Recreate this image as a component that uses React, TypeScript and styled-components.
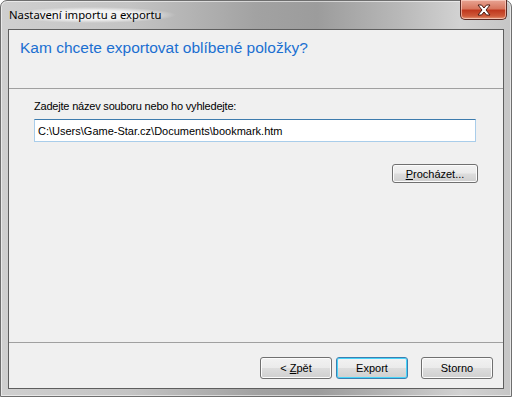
import React from "react";
import styled, {createGlobalStyle} from "styled-components";

const GlobalStyle = createGlobalStyle`
  html, body {
    margin: 0;
    padding: 0;
    width: 512px;
    height: 397px;
    overflow: hidden;
    background: #ffffff;
  }
  * {
    box-sizing: border-box;
  }
`

const Window = styled.div`
  width: 512px;
  height: 397px;
  display: flex;
  flex-direction: column;
  padding: 0 7px 7px 7px;
  border: 1px solid #6e6e6e;
  border-radius: 7px 7px 0 0;
  background: linear-gradient(90deg, #cfcfcf 0%, #c4c4c4 25%, #a2a2a2 50%, #9c9c9c 62%, #b8b8b8 78%, #d2d2d2 90%, #c6c6c6 100%);
  box-shadow: inset 0 0 0 1px rgba(255, 255, 255, 0.55);
`

const TitleBar = styled.div`
  height: 28px;
  flex: none;
  display: flex;
  align-items: flex-start;
  position: relative;
`

const Title = styled.div`
  margin-top: 6px;
  padding: 0 14px 0 1px;
  font-family: "Segoe UI", "Noto Sans", "Liberation Sans", sans-serif;
  font-size: 11.3px;
  line-height: 16px;
  color: #000000;
  background: radial-gradient(ellipse closest-side at center, rgba(255, 255, 255, 0.8) 55%, rgba(255, 255, 255, 0) 100%);
`

const CloseButton = styled.div`
  position: absolute;
  top: -1px;
  right: -3px;
  width: 47px;
  height: 20px;
  border: 1px solid #5c2a24;
  border-top: none;
  border-radius: 0 0 5px 5px;
  background: linear-gradient(180deg, #e8a493 0%, #d8775f 45%, #c0391f 55%, #cf5a3a 85%, #e59a7a 100%);
  box-shadow: inset 0 0 0 1px rgba(255, 220, 210, 0.6);
  display: flex;
  align-items: center;
  justify-content: center;
`

const Client = styled.div`
  flex: 1;
  display: flex;
  flex-direction: column;
  background: #f0f0f0;
  border: 1px solid #5e5e5e;
`

const Header = styled.div`
  height: 59px;
  flex: none;
  padding: 8px 0 0 11px;
  border-bottom: 1px solid #a0a0a0;
`

const Heading = styled.h1`
  margin: 0;
  font-family: "Liberation Sans", Arial, sans-serif;
  font-weight: normal;
  font-size: 15.5px;
  line-height: 20px;
  color: #1b6fd1;
`

const Body = styled.div`
  flex: 1;
  display: flex;
  flex-direction: column;
  padding: 10px 27px 0 25px;
  border-bottom: 1px solid #a0a0a0;
`

const Label = styled.div`
  font-family: "Liberation Sans", Arial, sans-serif;
  font-size: 11px;
  letter-spacing: -0.2px;
  line-height: 14px;
  color: #000000;
`

const PathInput = styled.div`
  margin-top: 6px;
  height: 23px;
  padding: 0 3px;
  display: flex;
  align-items: center;
  background: #ffffff;
  border: 1px solid #a9cdea;
  border-top-color: #3d7bad;
  font-family: "Liberation Sans", Arial, sans-serif;
  font-size: 11px;
  color: #000000;
  white-space: nowrap;
`

const BrowseRow = styled.div`
  margin-top: 22px;
  margin-right: -2px;
  display: flex;
  justify-content: flex-end;
`

const Button = styled.div<{ $wide?: boolean; $focused?: boolean; $apart?: boolean }>`
  width: ${p => (p.$wide ? "86px" : "72px")};
  height: ${p => (p.$wide ? "19px" : "22px")};
  margin-left: ${p => (p.$apart ? "9px" : "0")};
  display: flex;
  align-items: center;
  justify-content: center;
  border: 1px solid ${p => (p.$focused ? "#3c7fb1" : "#707070")};
  border-radius: 3px;
  background: linear-gradient(180deg, #f2f2f2 0%, #ebebeb 48%, #dddddd 52%, #cfcfcf 100%);
  box-shadow: inset 0 0 0 1px ${p => (p.$focused ? "#48d4f9" : "#fcfcfc")};
  font-family: "Liberation Sans", Arial, sans-serif;
  font-size: 11px;
  color: #000000;

  u {
    text-decoration: underline;
    text-underline-offset: 1px;
  }
`

const Footer = styled.div`
  height: 45px;
  flex: none;
  display: flex;
  align-items: flex-start;
  padding: 14px 10px 0 0;
  justify-content: flex-end;
  gap: 4px;
`

export default function App() {
    return (
        <>
            <GlobalStyle/>
            <Window>
                <TitleBar>
                    <Title>Nastavení importu a exportu</Title>
                    <CloseButton>
                        <svg width="16" height="12" viewBox="0 0 16 12">
                            <path d="M2 1 L5.5 1 L8 4 L10.5 1 L14 1 L10 6 L14 11 L10.5 11 L8 8 L5.5 11 L2 11 L6 6 Z"
                                  fill="#ffffff" stroke="#4a1a12" strokeWidth="1" strokeLinejoin="round"/>
                        </svg>
                    </CloseButton>
                </TitleBar>
                <Client>
                    <Header>
                        <Heading>Kam chcete exportovat oblíbené položky?</Heading>
                    </Header>
                    <Body>
                        <Label>Zadejte název souboru nebo ho vyhledejte:</Label>
                        <PathInput>C:\Users\Game-Star.cz\Documents\bookmark.htm</PathInput>
                        <BrowseRow>
                            <Button $wide><span><u>P</u>rocházet...</span></Button>
                        </BrowseRow>
                    </Body>
                    <Footer>
                        <Button><span>&lt; <u>Z</u>pět</span></Button>
                        <Button $focused><span>Export</span></Button>
                        <Button $apart><span>Storno</span></Button>
                    </Footer>
                </Client>
            </Window>
        </>
    )
}
